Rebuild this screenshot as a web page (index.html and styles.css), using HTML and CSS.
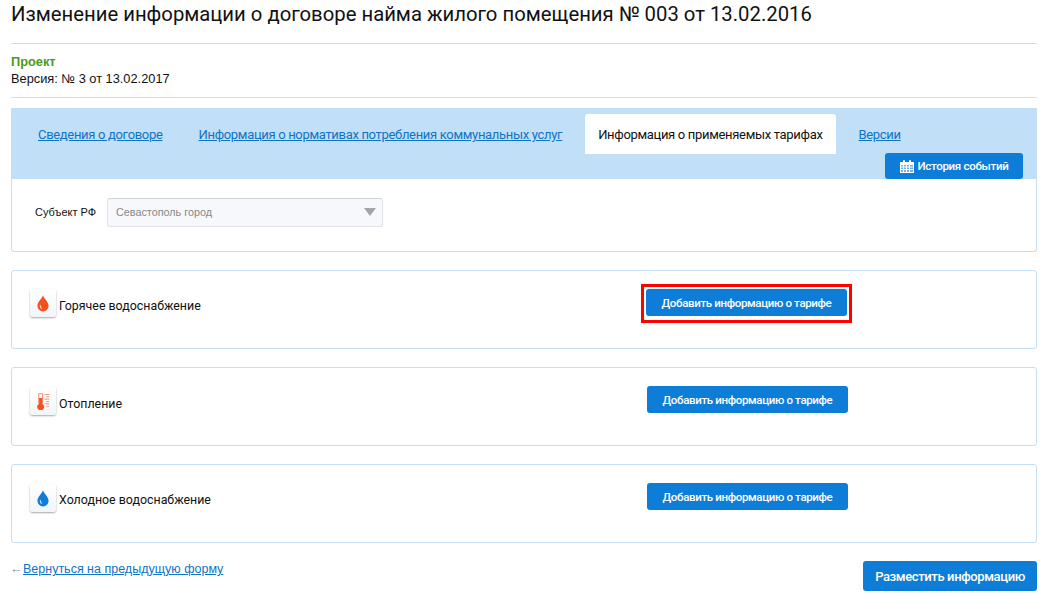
FILE: index.html
```html
<!DOCTYPE html>
<html lang="ru">
<head>
<meta charset="utf-8">
<title>Изменение информации о договоре</title>
<link rel="stylesheet" href="styles.css">
</head>
<body>
<div class="page">
  <h1 class="title">Изменение информации о договоре найма жилого помещения № 003 от 13.02.2016</h1>
  <div class="status">
    <div class="status-name">Проект</div>
    <div class="status-version">Версия: № 3 от 13.02.2017</div>
  </div>
  <div class="panel">
    <div class="tabs">
      <a class="tab" href="#">Сведения о договоре</a>
      <a class="tab" href="#">Информация о нормативах потребления коммунальных услуг</a>
      <span class="tab tab-active">Информация о применяемых тарифах</span>
      <a class="tab" href="#">Версии</a>
      <button class="btn btn-history">
        <svg class="cal" width="14" height="13" viewBox="0 0 14 13"><path fill="#fff" d="M0 2h3V1a1 1 0 0 1 2 0v1h4V1a1 1 0 0 1 2 0v1h3v11H0z"/><path fill="#0d7dd8" opacity=".6" d="M1 5h2v1.500H1zM4 5h2v1.500H4zM7 5h2v1.500H7zM10 5h3v1.500h-3zM1 7.500h2V9H1zM4 7.500h2V9H4zM7 7.500h2V9H7zM10 7.500h3V9h-3zM1 10h2v2H1zM4 10h2v2H4zM7 10h2v2H7zM10 10h3v2h-3z"/></svg>
        История событий
      </button>
    </div>
    <div class="filter">
      <label class="filter-label">Субъект РФ</label>
      <div class="select">
        <span>Севастополь город</span>
        <i class="select-arrow"></i>
      </div>
    </div>
  </div>

  <section class="card">
    <div class="service">
      <span class="icon-box">
        <svg width="12" height="17" viewBox="0 0 14 19"><path fill="#f4511e" d="M7 0C8 4 13.500 7.500 13.500 12.300A6.500 6.500 0 0 1 .5 12.300C.5 7.500 6 4 7 0z"/><path fill="#ffd9c8" d="M3.500 10.500c-.8 2.500.2 5 2.300 5.800-.3-1.400-1-3.500-2.300-5.800z"/></svg>
      </span>
      <span class="service-name">Горячее водоснабжение</span>
    </div>
    <div class="action"><span class="highlight"><button class="btn btn-add">Добавить информацию о тарифе</button></span></div>
  </section>

  <section class="card">
    <div class="service service-low">
      <span class="icon-box">
        <svg width="14" height="17" viewBox="0 0 18 21"><path fill="#fff" stroke="#f06a4a" d="M3.500.5h5v12h-5z"/><path fill="#f4511e" d="M4 6h4v7.300a4.500 4.500 0 1 1-4 0z"/><path stroke="#f47a5e" fill="none" d="M11 1.500h6M13 4.500h4M11 7.500h6M13 10.500h4M11 13.500h6M13 16.500h4"/></svg>
      </span>
      <span class="service-name">Отопление</span>
    </div>
    <div class="action"><button class="btn btn-add">Добавить информацию о тарифе</button></div>
  </section>

  <section class="card">
    <div class="service service-low">
      <span class="icon-box">
        <svg width="12" height="17" viewBox="0 0 14 19"><path fill="#0d7dd8" d="M7 0C8 4 13.500 7.500 13.500 12.300A6.500 6.500 0 0 1 .5 12.300C.5 7.500 6 4 7 0z"/><path fill="#cfe6f8" d="M3.500 10.500c-.8 2.500.2 5 2.300 5.800-.3-1.400-1-3.500-2.300-5.800z"/></svg>
      </span>
      <span class="service-name service-name-tight">Холодное водоснабжение</span>
    </div>
    <div class="action"><button class="btn btn-add">Добавить информацию о тарифе</button></div>
  </section>

  <div class="footer">
    <div class="back"><span class="back-arrow">←</span><a href="#">Вернуться на предыдущую форму</a></div>
    <button class="btn btn-publish">Разместить информацию</button>
  </div>
</div>
</body>
</html>
```
FILE: styles.css
```css
* { box-sizing: border-box; }
html, body { margin: 0; padding: 0; background: #fff; }
body { font-family: Roboto, "Liberation Sans", sans-serif; color: #111; height: 609px; overflow: hidden; }
.page { width: 1026px; margin-left: 11px; }
.title { margin: 0; height: 44px; padding-top: 1px; font-size: 20.3px; line-height: 26px; font-weight: 400; white-space: nowrap; border-bottom: 1px solid #d8d8e0; color: #111; }
.status { height: 54px; padding-top: 9px; border-bottom: 1px solid #dcdcdc; font-family: "Liberation Sans", sans-serif; font-size: 12.8px; line-height: 17px; }
.status-name { color: #4a9a1e; font-weight: 700; }
.panel { margin-top: 10px; border: 1px solid #c2dff6; border-top: 0; border-radius: 0 0 3px 3px; height: 144px; }
.tabs { position: relative; margin: 0 -1px; height: 71px; padding: 6px 0 0 9px; background: #c1dff6; display: flex; align-items: flex-start; }
.tab { height: 40px; padding: 0 18px; font-size: 13px; letter-spacing: -.32px; line-height: 42px; white-space: nowrap; color: #0d74c6; }
.tab-active { margin: 0 5px; padding: 0 13px; background: #fff; color: #111; border-radius: 3px 3px 0 0; }
.btn { border: 0; border-radius: 3px; background: #0d7dd8; color: #fff; font-family: Roboto, sans-serif; font-weight: 500; white-space: nowrap; }
.btn-history { position: absolute; right: 14px; bottom: 0; width: 138px; height: 26px; padding: 0 0 0 1px; font-size: 11.5px; letter-spacing: -.3px; display: flex; align-items: center; justify-content: center; gap: 3px; }
.filter { display: flex; align-items: center; height: 72px; padding: 0 0 6px 23px; }
.filter-label { font-family: "Liberation Sans", sans-serif; font-size: 11px; width: 72px; }
.select { width: 276px; height: 29px; padding: 0 8px; display: flex; align-items: center; justify-content: space-between; background: #f6f8fb; border: 1px solid #e0e2e6; border-top-color: #cfd1d5; border-radius: 3px; font-family: "Liberation Sans", sans-serif; font-size: 10.8px; color: #888; }
.select-arrow { width: 0; height: 0; margin-right: -2px; border: 6px solid transparent; border-top: 8px solid #a2a6ab; border-bottom: 0; }
.card { height: 79px; margin-top: 18px; border: 1px solid #c2dff6; border-radius: 3px; display: flex; }
.service { display: flex; align-items: flex-start; width: 635px; padding: 18px 0 0 18px; gap: 3px; }
.service-low { padding-top: 19px; }
.icon-box { width: 26px; height: 28px; display: flex; align-items: center; justify-content: center; background: linear-gradient(#fff, #f1f5f9); border-radius: 3px; box-shadow: 0 1px 2px rgba(0,0,0,.35); }
.service-name { margin-top: 9px; font-size: 12.4px; line-height: 16px; }
.service-name-tight { margin-top: 8px; }
.action { padding-top: 18px; }
.highlight { display: block; width: 211px; height: 39px; margin: -5px 0 0 -6px; padding: 2px; border: 3px solid #f00; }
.btn-add { display: block; width: 201px; height: 27px; padding: 0; font-size: 11.5px; letter-spacing: -.35px; }
.footer { display: flex; justify-content: space-between; margin-top: 18px; }
.back { display: flex; align-items: flex-start; height: 17px; font-family: "Liberation Sans", sans-serif; font-size: 12.5px; line-height: 17px; color: #6f93b0; }
.back-arrow { width: 12px; margin-left: -1px; margin-right: 1px; }
.back a { color: #0d74c6; }
.btn-publish { width: 174px; height: 30px; padding: 0; font-size: 13px; letter-spacing: -.38px; }
```
